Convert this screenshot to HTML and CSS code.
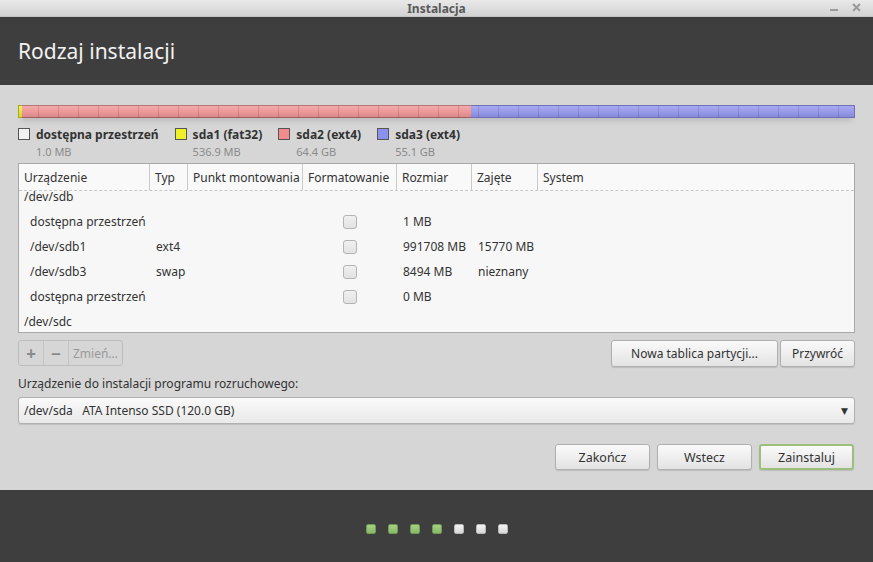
FILE: index.html
```html
<!DOCTYPE html>
<html lang="pl">
<head>
<meta charset="UTF-8">
<title>Instalacja</title>
<link rel="stylesheet" href="styles.css">
</head>
<body>
<!-- pasek tytułu okna -->
<div class="titlebar">
  <span class="title">Instalacja</span>
  <div class="wm-buttons">
    <span class="wm-min"></span>
    <svg class="wm-close" width="9" height="9" viewBox="0 0 9 9"><path d="M1 1 L8 8 M8 1 L1 8" stroke="#9a9a9a" stroke-width="2"/></svg>
  </div>
</div>

<div class="header">
  <h1>Rodzaj instalacji</h1>
</div>

<div class="content">
  <!-- pasek partycji -->
  <div class="partbar">
    <div class="seg seg-free" style="width:0.01%"></div>
    <div class="seg seg-sda1" style="width:0.45%"></div>
    <div class="seg seg-sda2" style="width:53.66%"></div>
    <div class="seg seg-sda3" style="width:45.88%"></div>
  </div>

  <div class="legend">
    <div class="legend-item">
      <div class="legend-name"><span class="swatch sw-free"></span>dostępna przestrzeń</div>
      <div class="legend-size">1.0 MB</div>
    </div>
    <div class="legend-item">
      <div class="legend-name"><span class="swatch sw-sda1"></span>sda1 (fat32)</div>
      <div class="legend-size">536.9 MB</div>
    </div>
    <div class="legend-item">
      <div class="legend-name"><span class="swatch sw-sda2"></span>sda2 (ext4)</div>
      <div class="legend-size">64.4 GB</div>
    </div>
    <div class="legend-item">
      <div class="legend-name"><span class="swatch sw-sda3"></span>sda3 (ext4)</div>
      <div class="legend-size">55.1 GB</div>
    </div>
  </div>

  <!-- tabela partycji -->
  <div class="table">
    <div class="row head">
      <div class="cell">Urządzenie</div>
      <div class="cell">Typ</div>
      <div class="cell">Punkt montowania</div>
      <div class="cell">Formatowanie</div>
      <div class="cell">Rozmiar</div>
      <div class="cell">Zajęte</div>
      <div class="cell">System</div>
    </div>
    <div class="row disk first">
      <div class="cell">/dev/sdb</div>
    </div>
    <div class="row part">
      <div class="cell">dostępna przestrzeń</div>
      <div class="cell"></div>
      <div class="cell"></div>
      <div class="cell center"><span class="check"></span></div>
      <div class="cell">1 MB</div>
      <div class="cell"></div>
      <div class="cell"></div>
    </div>
    <div class="row part">
      <div class="cell">/dev/sdb1</div>
      <div class="cell">ext4</div>
      <div class="cell"></div>
      <div class="cell center"><span class="check"></span></div>
      <div class="cell">991708 MB</div>
      <div class="cell">15770 MB</div>
      <div class="cell"></div>
    </div>
    <div class="row part">
      <div class="cell">/dev/sdb3</div>
      <div class="cell">swap</div>
      <div class="cell"></div>
      <div class="cell center"><span class="check"></span></div>
      <div class="cell">8494 MB</div>
      <div class="cell">nieznany</div>
      <div class="cell"></div>
    </div>
    <div class="row part">
      <div class="cell">dostępna przestrzeń</div>
      <div class="cell"></div>
      <div class="cell"></div>
      <div class="cell center"><span class="check"></span></div>
      <div class="cell">0 MB</div>
      <div class="cell"></div>
      <div class="cell"></div>
    </div>
    <div class="row disk">
      <div class="cell">/dev/sdc</div>
    </div>
  </div>

  <div class="toolbar">
    <div class="btn-group">
      <span class="gbtn">+</span>
      <span class="gbtn">−</span>
      <span class="gbtn text">Zmień...</span>
    </div>
    <div class="toolbar-right">
      <button class="btn btn-new">Nowa tablica partycji...</button>
      <button class="btn btn-revert">Przywróć</button>
    </div>
  </div>

  <div class="boot-label">Urządzenie do instalacji programu rozruchowego:</div>
  <div class="combo">
    <span>/dev/sda&nbsp;&nbsp;&nbsp;ATA Intenso SSD (120.0 GB)</span>
    <span class="arrow">▼</span>
  </div>

  <div class="actions">
    <button class="btn btn-act">Zakończ</button>
    <button class="btn btn-act">Wstecz</button>
    <button class="btn btn-act btn-default">Zainstaluj</button>
  </div>
</div>

<div class="footer">
  <span class="dot done"></span>
  <span class="dot done"></span>
  <span class="dot done"></span>
  <span class="dot done"></span>
  <span class="dot"></span>
  <span class="dot"></span>
  <span class="dot"></span>
</div>
</body>
</html>
```

FILE: styles.css
```css
body {
  margin: 0;
  overflow: hidden;
  font-family: "Noto Sans", "DejaVu Sans", sans-serif;
  font-size: 12px;
  color: #333;
  background: #d6d6d6;
}

/* pasek tytułu */
.titlebar {
  height: 16px;
  background: linear-gradient(#e9e9e9, #d3d3d3);
  border-bottom: 1px solid #c4c4c4;
  display: flex;
  align-items: center;
  justify-content: center;
  position: relative;
}
.title {
  font-weight: bold;
  font-size: 12px;
  color: #5a5a5a;
}
.wm-buttons {
  position: absolute;
  right: 12px;
  top: 3px;
  display: flex;
  align-items: center;
  gap: 14px;
}
.wm-min {
  width: 8px;
  height: 2px;
  background: #9a9a9a;
  margin-top: 5px;
}

.header {
  height: 68px;
  background: #3e3e3e;
  display: flex;
  align-items: center;
  padding-left: 18px;
}
.header h1 {
  margin: 0;
  font-weight: normal;
  font-size: 21px;
  color: #f2f2f2;
}

.content {
  height: 385px;
  padding: 20px 18px 0 18px;
}

/* pasek partycji */
.partbar {
  display: flex;
  height: 13px;
  position: relative;
  box-shadow: 0 6px 5px -3px rgba(0, 0, 0, 0.12);
}
.partbar::after {
  content: "";
  position: absolute;
  inset: 0;
  background: repeating-linear-gradient(90deg, transparent 0 19px, rgba(0, 0, 0, 0.12) 19px 20px);
  background-position: 1px 0;
}
.seg {
  height: 100%;
  box-sizing: border-box;
}
.seg-free { background: #eee; }
.seg-sda1 {
  background: linear-gradient(#f3f35a, #d6d628);
  border: 1px solid #a8a820;
  border-right: none;
}
.seg-sda2 {
  background: linear-gradient(#f4a9a9, #ea9696 60%, #d98787);
  border-top: 1px solid #b57878;
  border-bottom: 1px solid #a06060;
}
.seg-sda3 {
  background: linear-gradient(#a9aaf2, #9598e6 60%, #8689d8);
  border: 1px solid #6f72b8;
  border-left: none;
}

.legend {
  display: flex;
  margin-top: 9px;
  height: 31px;
}
.legend-item {
  margin-right: 16px;
}
.legend-name {
  display: flex;
  align-items: center;
  font-weight: bold;
  height: 14px;
}
.swatch {
  width: 10px;
  height: 10px;
  border: 1px solid #555;
  margin-right: 6px;
}
.sw-free { background: #f2f2f2; }
.sw-sda1 { background: #f0f02a; }
.sw-sda2 { background: #f08c8c; }
.sw-sda3 { background: #8c91f0; }
.legend-size {
  color: #8a8a8a;
  font-size: 11px;
  padding-left: 18px;
  margin-top: 3px;
}

/* tabela */
.table {
  margin-top: 5px;
  height: 168px;
  background: #f7f7f7;
  border: 1px solid #a8a8a8;
}
.row {
  display: grid;
  grid-template-columns: 131px 38px 115px 94px 75px 66px 1fr;
  height: 25px;
  align-items: center;
}
.row.head {
  height: 26px;
  border-bottom: 1px dashed #c8c8c8;
  background: #f9f9f9;
}
.row.head .cell {
  height: 100%;
  display: flex;
  align-items: center;
  border-right: 1px solid #cacaca;
  padding-left: 5px;
}
.row.head .cell:last-child { border-right: none; }
.cell {
  padding-left: 6px;
  white-space: nowrap;
}
.row.disk .cell { padding-left: 5px; }
.row.first {
  height: 18px;
  align-items: start;
}
.row.first .cell {
  line-height: 12px;
}
.row.part .cell:first-child { padding-left: 11px; }
.cell.center {
  display: flex;
  justify-content: center;
  padding-left: 0;
}
.check {
  width: 12px;
  height: 12px;
  border: 1px solid #b4b4b4;
  border-radius: 3px;
  background: linear-gradient(#f0f0f0, #e2e2e2);
}

/* przyciski */
.toolbar {
  display: flex;
  justify-content: space-between;
  margin-top: 7px;
  height: 27px;
}
.btn-group {
  display: flex;
  height: 26px;
  border: 1px solid #bdbdbd;
  border-radius: 3px;
  box-sizing: border-box;
}
.gbtn {
  display: flex;
  align-items: center;
  justify-content: center;
  width: 24px;
  color: #8a8a8a;
  font-size: 17px;
  font-weight: bold;
  border-right: 1px solid #c4c4c4;
}
.gbtn.text {
  width: 53px;
  font-size: 12px;
  font-weight: normal;
  color: #999;
  border-right: none;
}
.toolbar-right {
  display: flex;
  gap: 2px;
}
.btn {
  font-family: inherit;
  font-size: 12px;
  color: #333;
  height: 27px;
  background: linear-gradient(#fafafa, #e3e3e3);
  border: 1px solid #b0b0b0;
  border-radius: 3px;
  box-shadow: 0 1px 1px rgba(0, 0, 0, 0.12);
  padding: 0;
}
.btn-new { width: 167px; }
.btn-revert { width: 75px; }

.boot-label {
  margin-top: 10px;
  height: 20px;
  line-height: 14px;
}
.combo {
  height: 27px;
  box-sizing: border-box;
  border: 1px solid #b0b0b0;
  border-radius: 3px;
  background: linear-gradient(#fafafa, #e9e9e9);
  box-shadow: 0 1px 1px rgba(0, 0, 0, 0.1);
  display: flex;
  align-items: center;
  justify-content: space-between;
  padding: 0 6px 0 5px;
}
.arrow {
  font-size: 9px;
  color: #333;
}

.actions {
  display: flex;
  justify-content: flex-end;
  gap: 7px;
  margin-top: 20px;
  padding-right: 1px;
}
.btn-act {
  width: 95px;
  height: 26px;
  font-size: 12.5px;
}
.btn-default {
  border: 2px solid #9cbf7e;
}

/* stopka z postępem */
.footer {
  height: 66px;
  padding-top: 6px;
  background: #3e3e3e;
  display: flex;
  justify-content: center;
  align-items: center;
  gap: 12px;
  padding-left: 1px;
}
.dot {
  width: 10px;
  height: 10px;
  box-sizing: border-box;
  border-radius: 2px;
  background: linear-gradient(#f4f4f4, #d8d8d8);
  border: 1px solid #b8b8b8;
}
.dot.done {
  background: linear-gradient(#a6cf86, #88b868);
  border: 1px solid #6f9a54;
}
```
